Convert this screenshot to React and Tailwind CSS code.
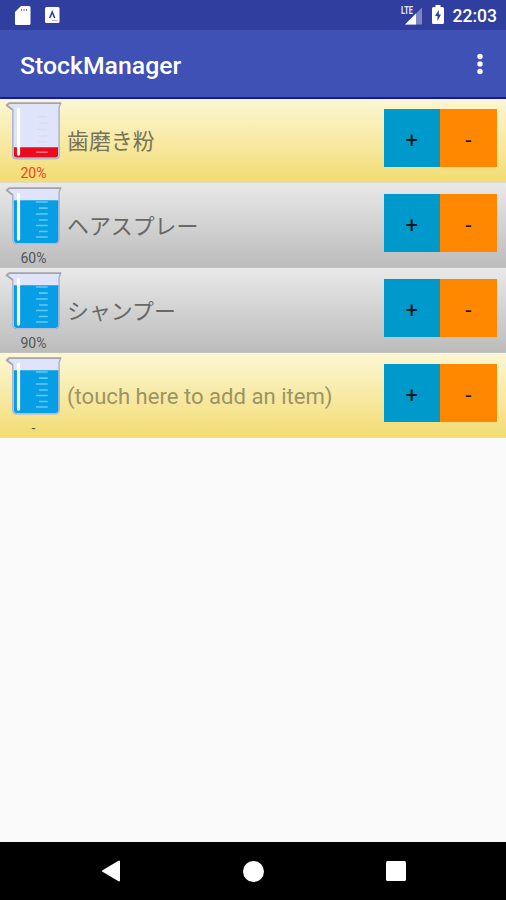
const rows = [
  { name: '歯磨き粉', level: '20%', low: true, tone: 'gold' },
  { name: 'ヘアスプレー', level: '60%', tone: 'silver' },
  { name: 'シャンプー', level: '90%', tone: 'silver' },
  { name: '(touch here to add an item)', level: '-', tone: 'gold', hint: true },
];

function Beaker({ low }) {
  return (
    <svg className="block h-[64px] w-[66px]" viewBox="0 -0.5 66 64" fill="none">
      <path d="M6.5 5.500 12 11V58Q12 62 16 62H56Q60 62 60 58V8L61.500 4.500H9Z" fill="#dfe4fa" />
      {low ? (
        <path d="M13.500 49.500H58.500V57Q58.500 60 55.500 60H16.500Q13.500 60 13.500 57Z" fill="#ea0c1c" />
      ) : (
        <path d="M13.500 17H59V57Q59 60.500 55.500 60.500H16.500Q13.500 60.500 13.500 57Z" fill="#069fe6" />
      )}
      <path d="M12.500 11V57.500Q12.500 61.300 16.500 61.300H55.500Q59.500 61.300 59.500 57.500V9L61 5" stroke="#a6afcb" strokeWidth="1.400" />
      <path d="M61.800 4.600H9L6.200 6.800 12.300 11.500" stroke="#a3a5ac" strokeWidth="1.800" strokeLinejoin="round" />
      <path d="M18.300 11V56.500" stroke="#fff" strokeWidth="3.200" strokeLinecap="round" />
      {low ? (
        <>
          <path d="M37 18.500H47M39 25H48M37 31.500H47M39 38H48M37 44H47" stroke="#d3daf2" strokeWidth="1" />
          <path d="M36 54.500H48" stroke="#ff8d98" strokeWidth="1.200" />
        </>
      ) : (
        <path d="M36 18.800H48M39 25H48M36 31H48M39 37H48M36 42.700H48M39 48.700H48M36 54.300H48" stroke="#65c6f1" strokeWidth="1.600" />
      )}
    </svg>
  );
}

function Row({ row }) {
  const gold = row.tone === 'gold';
  return (
    <li
      className={
        'flex h-[85px] border-b ' +
        (gold
          ? 'border-[#dedbd0] bg-linear-to-b from-[#fcf7d4] to-[#f3dc70]'
          : 'border-[#c4c2bc] bg-linear-to-b from-[#e9e9e9] to-[#bcbcbc]')
      }
    >
      <div className="flex w-[67px] flex-col">
        <Beaker low={row.low} />
        <span className={'mt-[3px] text-center text-[14px] leading-[18px] ' + (row.low ? 'text-[#f4401c]' : 'text-[#555]')}>
          {row.level}
        </span>
      </div>
      <div
        className={
          'flex flex-1 items-center whitespace-nowrap ' +
          (row.hint
            ? 'pt-[4px] text-[22.1px] text-[#9b9562]'
            : gold
              ? 'pt-[4px] text-[21.9px] text-[#77735a]'
              : 'pt-[4px] text-[21.9px] text-[#686868]')
        }
      >
        {row.name}
      </div>
      <div className="mt-[11px] mr-[9.5px] flex h-[58px] text-[22px] text-[#101820]">
        <button className="w-[56.5px] bg-[#0099cc] pt-[4px]">+</button>
        <button className="w-[56.5px] bg-[#ff8800] pt-[4px]">-</button>
      </div>
    </li>
  );
}

export default function App() {
  return (
    <div className="flex h-[900px] w-[506px] flex-col overflow-hidden bg-[#fafafa] font-[Roboto,'Noto_Sans_CJK_JP',sans-serif]">
      <div className="flex h-[30px] items-center bg-[#303f9f] pr-[9px] pl-[15px] text-white">
        <svg className="h-[19px] w-[16px]" viewBox="0 0 16 19">
          <path d="M6 0H14Q15.500 0 15.500 1.500V17.500Q15.500 19 14 19H1.500Q0 19 0 17.500V6Z" fill="#fff" />
          <path d="M6.500 3V5M9 3V5M11.500 3V5" stroke="#303f9f" strokeWidth="1" opacity=".7" />
        </svg>
        <svg className="ml-[14px] h-[16px] w-[15px]" viewBox="0 0 15 16">
          <rect width="14.500" height="16" rx="1.500" fill="#fff" />
          <path d="M4.700 11 7.200 5 9.700 11" fill="none" stroke="#303f9f" strokeWidth="1.600" />
          <path d="M7 13.500H12.500" stroke="#9aa2cf" strokeWidth=".8" />
        </svg>
        <div className="flex-1" />
        <svg className="mb-px h-[20px] w-[24px]" viewBox="-2 0 24 20">
          <path d="M21 2.500V19.500H4Z" fill="#7d87c3" />
          <path d="M15 8.500V19.500H4Z" fill="#fff" />
          <path d="M0 1H12V8.500L9 11H0Z" fill="#303f9f" />
          <text x="0" y="9" fontSize="10.500" fontWeight="700" textLength="12" lengthAdjust="spacingAndGlyphs" fill="#e4e7f6">LTE</text>
        </svg>
        <svg className="mb-px ml-[9px] h-[19px] w-[12px]" viewBox="0 0 12 19">
          <path d="M3.500 0H8.500V2H10.500Q12 2 12 3.500V17.500Q12 19 10.500 19H1.500Q0 19 0 17.500V3.500Q0 2 1.500 2H3.500Z" fill="#fff" />
          <path d="M6.800 5 3 11H5.500V16L9 9.500H6.800Z" fill="#303f9f" />
        </svg>
        <span className="mt-[3px] ml-[9px] text-[17.5px] leading-none font-medium">22:03</span>
      </div>
      <header className="relative z-10 flex h-[69px] items-center justify-between border-b-2 border-[#1318a0] bg-[#3f51b5] pr-[23px] pl-[20px] text-white">
        <h1 className="pt-[4px] text-[24.8px] font-medium">StockManager</h1>
        <svg className="mt-px h-[22px] w-[6px]" viewBox="0 0 6 22" fill="#fff">
          <circle cx="3" cy="3.500" r="2.700" />
          <circle cx="3" cy="11" r="2.700" />
          <circle cx="3" cy="18.500" r="2.700" />
        </svg>
      </header>
      <ul className="-mt-px">
        {rows.map((row) => (
          <Row key={row.name} row={row} />
        ))}
      </ul>
      <div className="flex-1" />
      <nav className="flex h-[58px] items-center justify-between bg-black pr-[100px] pl-[101px]">
        <svg className="h-[22px] w-[20px]" viewBox="0 0 20 22">
          <path d="M18 1.500V20.500L2 11Z" fill="#fff" stroke="#fff" strokeWidth="2" strokeLinejoin="round" />
        </svg>
        <div className="mr-px size-[21px] rounded-full bg-white" />
        <div className="size-[20px] rounded-[1.5px] bg-white" />
      </nav>
    </div>
  );
}
